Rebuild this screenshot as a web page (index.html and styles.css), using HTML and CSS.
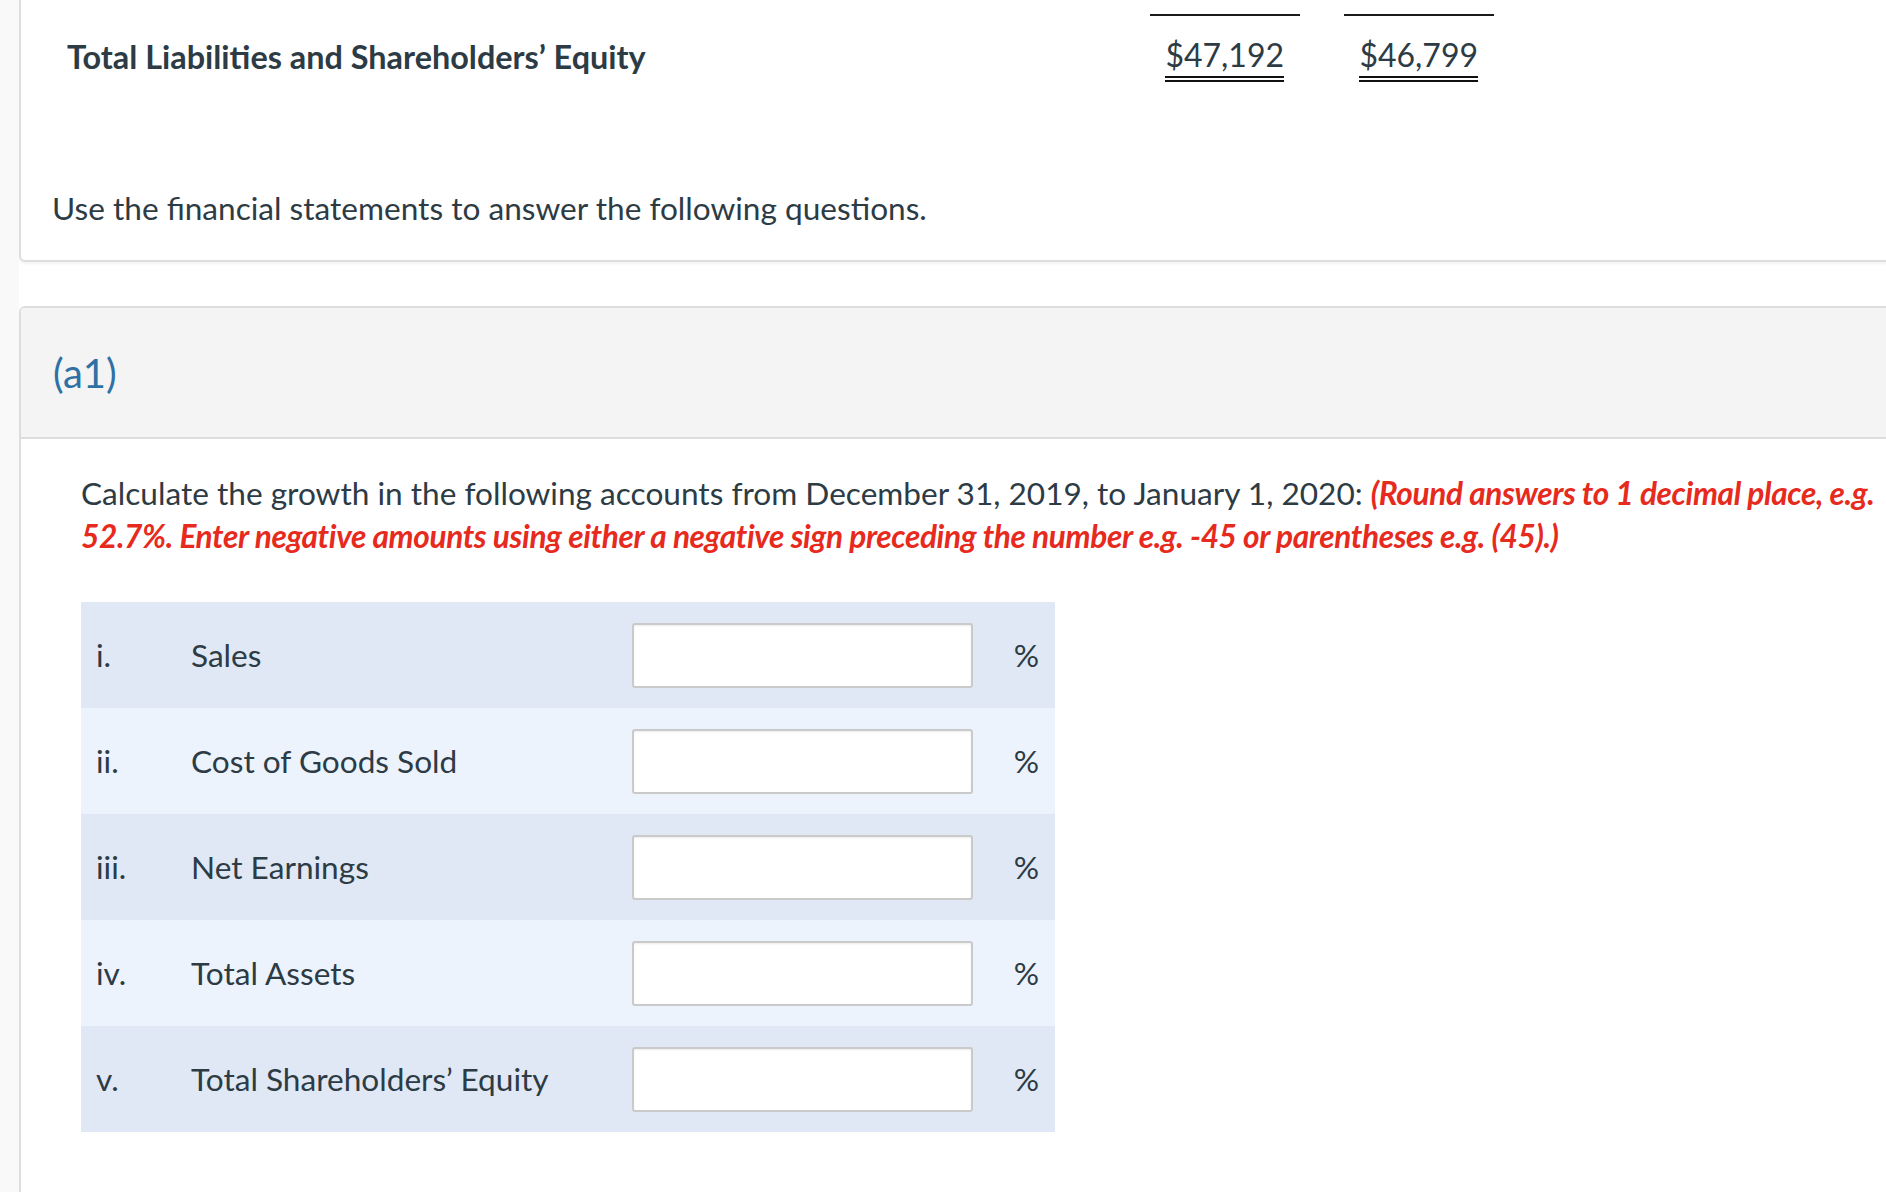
FILE: index.html
```html
<!DOCTYPE html>
<html lang="en">
<head>
<meta charset="utf-8">
<title>Growth in accounts</title>
<link rel="stylesheet" href="styles.css">
</head>
<body>
<div class="page">
  <aside class="rail"></aside>
  <main class="main">
    <section class="card card-top">
      <div class="stmt-row">
        <div class="stmt-label">Total Liabilities and Shareholders’ Equity</div>
        <div class="stmt-amount"><span class="dbl">$47,192</span></div>
        <div class="stmt-amount"><span class="dbl">$46,799</span></div>
      </div>
      <p class="intro">Use the financial statements to answer the following questions.</p>
    </section>

    <section class="card card-q">
      <header class="q-head"><h2 class="q-title">(a1)</h2></header>
      <div class="q-body">
        <p class="prompt">Calculate the growth in the following accounts from December 31, 2019, to January 1, 2020: <em class="note">(Round answers to 1 decimal place, e.g. 52.7%. Enter negative amounts using either a negative sign preceding the number e.g. -45 or parentheses e.g. (45).)</em></p>
        <div class="answers">
          <div class="ans-row"><span class="num">i.</span><span class="lbl">Sales</span><input class="ans-input" type="text" aria-label="Sales"><span class="unit">%</span></div>
          <div class="ans-row"><span class="num">ii.</span><span class="lbl">Cost of Goods Sold</span><input class="ans-input" type="text" aria-label="Cost of Goods Sold"><span class="unit">%</span></div>
          <div class="ans-row"><span class="num">iii.</span><span class="lbl">Net Earnings</span><input class="ans-input" type="text" aria-label="Net Earnings"><span class="unit">%</span></div>
          <div class="ans-row"><span class="num">iv.</span><span class="lbl">Total Assets</span><input class="ans-input" type="text" aria-label="Total Assets"><span class="unit">%</span></div>
          <div class="ans-row"><span class="num">v.</span><span class="lbl">Total Shareholders’ Equity</span><input class="ans-input" type="text" aria-label="Total Shareholders’ Equity"><span class="unit">%</span></div>
        </div>
      </div>
    </section>
  </main>
</div>
</body>
</html>
```

FILE: styles.css
```css
* { box-sizing: border-box; }

html, body {
  margin: 0;
  padding: 0;
  background: #ffffff;
  overflow: hidden;
}

body {
  font-family: Lato, "Liberation Sans", sans-serif;
  font-size: 31.6px;
  color: #2d3b45;
}

.page {
  display: flex;
  min-height: 1192px;
}

.rail {
  flex: 0 0 19px;
  background: #f9f9f9;
}

.main {
  flex: 1;
  min-width: 0;
  overflow: hidden;
}

.card {
  border: 2px solid #dddddd;
  margin-right: -40px;
  background: #ffffff;
}

.card-top {
  border-top: none;
  border-radius: 0 0 6px 6px;
  padding: 0 0 34px 31px;
  box-shadow: 0 2px 3px rgba(0, 0, 0, 0.05);
}

.stmt-row {
  display: flex;
  align-items: flex-start;
}

.stmt-label {
  flex: 0 0 1098px;
  padding: 39px 0 0 15px;
  font-size: 32.4px;
  font-weight: 700;
  line-height: 36px;
}

.stmt-amount {
  flex: 0 0 150px;
  margin-top: 14px;
  padding: 19px 16px 0 0;
  border-top: 2px solid #1b1b1b;
  text-align: right;
  font-size: 32px;
}

.stmt-amount + .stmt-amount {
  margin-left: 44px;
}

.dbl {
  display: inline-block;
  line-height: 36px;
  padding-bottom: 3px;
  border-bottom: 6px double #111111;
}

.intro {
  margin: 108px 0 0;
  line-height: 36px;
}

.card-q {
  margin-top: 44px;
  border-radius: 6px 6px 0 0;
  border-bottom: none;
}

.q-head {
  display: flex;
  align-items: center;
  height: 131px;
  padding-left: 32px;
  background: #f4f4f4;
  border-bottom: 2px solid #dddddd;
  border-radius: 4px 4px 0 0;
}

.q-title {
  margin: 0;
  font-size: 40px;
  font-weight: 400;
  color: #2f70a5;
}

.q-body {
  padding: 33px 0 200px 60px;
}

.prompt {
  margin: 0;
  width: 1808px;
  line-height: 43px;
}

.note {
  font-weight: 700;
  font-style: italic;
  letter-spacing: -0.37px;
  color: #e62a1d;
}

.answers {
  margin-top: 44px;
  width: 974px;
}

.ans-row {
  display: grid;
  grid-template-columns: 95px 441px 341px 1fr;
  align-items: center;
  height: 106px;
  padding: 0 16px 0 15px;
  background: #dfe8f4;
}

.ans-row:nth-child(even) {
  background: #ecf3fd;
}

.num, .lbl {
  line-height: 36px;
}

.ans-input {
  width: 341px;
  height: 65px;
  margin: 0;
  border: 2px solid #cacaca;
  border-radius: 3px;
  background: #ffffff;
  box-shadow: inset 0 1px 2px rgba(0, 0, 0, 0.08);
  font: inherit;
}

.unit {
  justify-self: end;
  line-height: 36px;
}
```
